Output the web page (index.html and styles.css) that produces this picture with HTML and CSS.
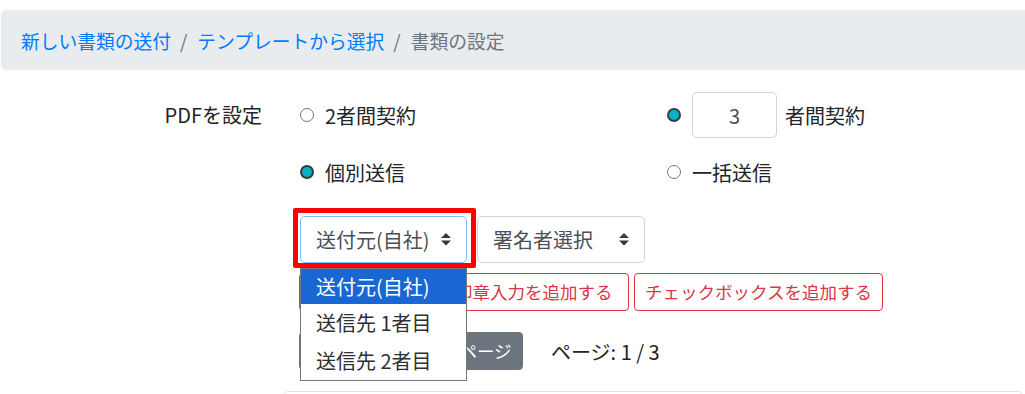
FILE: index.html
```html
<!DOCTYPE html>
<html lang="ja">
<head>
<meta charset="utf-8">
<title>書類の設定</title>
<link rel="stylesheet" href="styles.css">
</head>
<body>
<nav class="crumbs">
  <a class="crumb link" href="#">新しい書類の送付</a><span class="sep">/</span><a class="crumb link" href="#">テンプレートから選択</a><span class="sep">/</span><span class="crumb active">書類の設定</span>
</nav>
<div class="form">
  <div class="label">PDFを設定</div>
  <div class="content">
    <div class="choices">
      <label class="radio"><span class="dot"></span>2者間契約</label>
      <label class="radio"><span class="dot on"></span><span class="num">3</span>者間契約</label>
      <label class="radio"><span class="dot on"></span>個別送信</label>
      <label class="radio"><span class="dot"></span>一括送信</label>
    </div>
    <div class="selects">
      <div class="sel-wrap">
        <div class="select focus"><span>送付元(自社)</span><svg class="arrow" viewBox="0 0 4 5"><path d="M2 0L0 2h4zm0 5L0 3h4z"/></svg></div>
        <div class="annot"></div>
        <div class="menu">
          <div class="opt current">送付元(自社)</div>
          <div class="opt">送信先 1者目</div>
          <div class="opt">送信先 2者目</div>
        </div>
      </div>
      <div class="select second"><span>署名者選択</span><svg class="arrow" viewBox="0 0 4 5"><path d="M2 0L0 2h4zm0 5L0 3h4z"/></svg></div>
    </div>
    <div class="btn-row">
      <button class="btn danger wide">テキスト・署名・印章入力を追加する</button>
      <button class="btn danger">チェックボックスを追加する</button>
    </div>
    <div class="pager">
      <button class="btn secondary">前のページ</button>
      <button class="btn secondary">次のページ</button>
      <span class="page-info">ページ: 1 / 3</span>
    </div>
    <div class="canvas"></div>
  </div>
</div>
</body>
</html>
```
FILE: styles.css
```css
body {
  margin: 0;
  font-family: "Noto Sans CJK JP", "Noto Sans", sans-serif;
  color: #212529;
  background: #fff;
  overflow: hidden;
}

.crumbs {
  display: flex;
  margin: 10px 0 0 1px;
  padding: 16px 20px 14px;
  background: #e9ecef;
  border-radius: 5px 0 0 5px;
  font-size: 18.75px;
  line-height: 30px;
}
.crumb { text-decoration: none; }
.link { color: #007bff; }
.active { color: #6c757d; }
.sep { color: #6c757d; padding: 0 10px 0 9px; }

.form {
  display: flex;
  margin-top: 22px;
}
.label {
  width: 283px;
  box-sizing: border-box;
  padding-right: 21px;
  text-align: right;
  font-size: 20px;
  line-height: 46px;
}
.content {
  flex: 1;
  padding-left: 17px;
}

.choices {
  display: grid;
  grid-template-columns: 367px 1fr;
  row-gap: 11px;
}
.radio {
  display: flex;
  align-items: center;
  height: 46px;
  font-size: 20px;
}
.dot {
  width: 14px;
  height: 14px;
  box-sizing: border-box;
  border: 1px solid #767676;
  border-radius: 50%;
  margin-right: 11px;
  background: #fff;
}
.dot.on {
  border: 2px solid #3c3c3c;
  background: #00b3c4;
}
.num {
  width: 85px;
  height: 46px;
  box-sizing: border-box;
  border: 1px solid #ced4da;
  border-radius: 5px;
  display: flex;
  align-items: center;
  justify-content: center;
  color: #495057;
  margin-right: 8px;
}

.selects {
  display: flex;
  gap: 10px;
  margin-top: 21px;
}
.sel-wrap { position: relative; }
.select {
  width: 167px;
  height: 47px;
  box-sizing: border-box;
  border: 1px solid #ced4da;
  border-radius: 5px;
  padding: 0 15px;
  display: flex;
  align-items: center;
  justify-content: space-between;
  font-size: 20px;
  color: #495057;
}
.select.second { width: 168px; }
.select.focus { border-color: #80bdff; }
.arrow {
  width: 10px;
  height: 12.5px;
  fill: #343a40;
}
.annot {
  position: absolute;
  left: -7px;
  top: -8px;
  width: 183px;
  height: 60px;
  box-sizing: border-box;
  border: 5px solid #ff0000;
  border-radius: 2px;
}
.menu {
  position: absolute;
  left: 0;
  top: 52px;
  width: 167px;
  box-sizing: border-box;
  border: 1px solid #767676;
  background: #fff;
  z-index: 2;
}
.opt {
  height: 38px;
  line-height: 38px;
  padding-left: 15px;
  font-size: 20px;
  color: #303030;
}
.opt.current {
  background: #1967d2;
  color: #fff;
  height: 35px;
  line-height: 35px;
}

.btn-row {
  display: flex;
  gap: 5px;
  margin-top: 10px;
  margin-left: -1px;
}
.btn {
  font-family: inherit;
  font-size: 17.5px;
  line-height: 26px;
  padding: 5px 10px;
  border-radius: 4px;
  border: 1px solid transparent;
  background: none;
  white-space: nowrap;
}
.danger {
  color: #dc3545;
  border-color: #dc3545;
}
.wide { width: 330px; }

.pager {
  display: flex;
  align-items: center;
  gap: 4px;
  margin-top: 21px;
  margin-left: -1px;
}
.secondary {
  width: 110px;
  background: #6c757d;
  border-color: #6c757d;
  color: #fff;
}
.page-info {
  margin-left: 24px;
  font-size: 20px;
}

.canvas {
  margin: 21px 2px 0 -17px;
  height: 40px;
  border: 1px solid #dee2e6;
  border-radius: 5px;
}
```
